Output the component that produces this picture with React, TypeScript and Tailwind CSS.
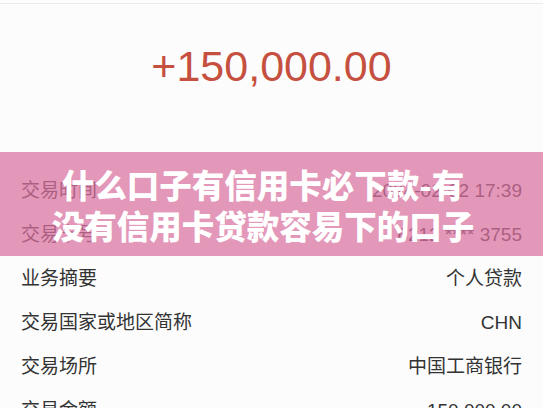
import React from "react";

const rows: [string, string][] = [
  ["交易时间", "2024-02-02 17:39"],
  ["交易卡号", "6212 **** 3755"],
  ["业务摘要", "个人贷款"],
  ["交易国家或地区简称", "CHN"],
  ["交易场所", "中国工商银行"],
  ["交易金额", "150,000.00"],
];

export default function App() {
  return (
    <div
      className="relative w-[543px] h-[408px] overflow-hidden bg-[#fcfcfc]"
      style={{ fontFamily: '"Liberation Sans", "Noto Sans CJK SC", sans-serif' }}
    >
      <div className="h-[4px] bg-[#fdfdfd] border-b border-[#ececec]" />
      <div className="h-[165px] flex items-start justify-center pt-[36px]">
        <div className="text-[43px] leading-[52px] text-[#c6503f]">+150,000.00</div>
      </div>
      <div className="flex flex-col">
        {rows.map(([k, v]) => (
          <div key={k} className="h-[44px] flex items-center justify-between px-[21px] text-[19px] text-[#333333]">
            <span>{k}</span>
            <span>{v}</span>
          </div>
        ))}
      </div>
      <div className="absolute left-0 right-0 top-[152px] h-[104px] bg-[rgba(218,112,160,0.72)] flex flex-col items-center justify-center pr-[17px]">
        <div
          className="text-white text-[32.5px] leading-[41px] font-black text-center"
          style={{ fontFamily: '"Noto Sans CJK SC", sans-serif' }}
        >
          <div>什么口子有信用卡必下款-有</div>
          <div>没有信用卡贷款容易下的口子</div>
        </div>
      </div>
    </div>
  );
}
